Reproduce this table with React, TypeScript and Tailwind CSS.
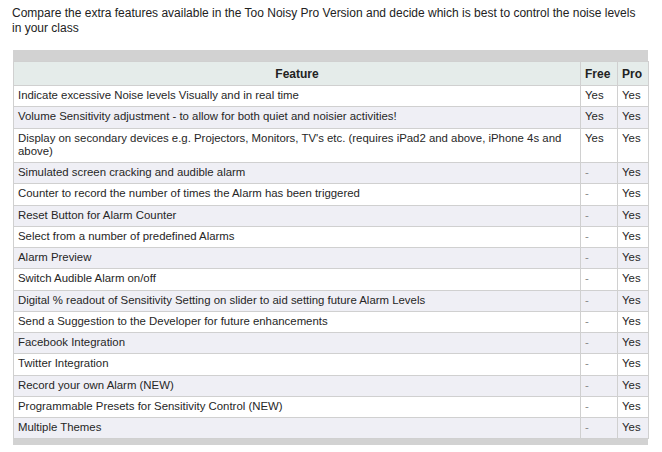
import React from 'react';

type Row = { feature: string; free: string; pro: string };

const rows: Row[] = [
  { feature: 'Indicate excessive Noise levels Visually and in real time', free: 'Yes', pro: 'Yes' },
  { feature: 'Volume Sensitivity adjustment - to allow for both quiet and noisier activities!', free: 'Yes', pro: 'Yes' },
  {
    feature: "Display on secondary devices e.g. Projectors, Monitors, TV's etc. (requires iPad2 and above, iPhone 4s and above)",
    free: 'Yes',
    pro: 'Yes',
  },
  { feature: 'Simulated screen cracking and audible alarm', free: '-', pro: 'Yes' },
  { feature: 'Counter to record the number of times the Alarm has been triggered', free: '-', pro: 'Yes' },
  { feature: 'Reset Button for Alarm Counter', free: '-', pro: 'Yes' },
  { feature: 'Select from a number of predefined Alarms', free: '-', pro: 'Yes' },
  { feature: 'Alarm Preview', free: '-', pro: 'Yes' },
  { feature: 'Switch Audible Alarm on/off', free: '-', pro: 'Yes' },
  { feature: 'Digital % readout of Sensitivity Setting on slider to aid setting future Alarm Levels', free: '-', pro: 'Yes' },
  { feature: 'Send a Suggestion to the Developer for future enhancements', free: '-', pro: 'Yes' },
  { feature: 'Facebook Integration', free: '-', pro: 'Yes' },
  { feature: 'Twitter Integration', free: '-', pro: 'Yes' },
  { feature: 'Record your own Alarm (NEW)', free: '-', pro: 'Yes' },
  { feature: 'Programmable Presets for Sensitivity Control (NEW)', free: '-', pro: 'Yes' },
  { feature: 'Multiple Themes', free: '-', pro: 'Yes' },
];

const App: React.FC = () => {
  return (
    <div className="min-h-screen bg-white px-[12px] pt-[6px] font-['Liberation_Sans',Arial,sans-serif]">
      <p className="w-[632px] text-[12px] leading-[15px] text-[#222]">
        Compare the extra features available in the Too Noisy Pro Version and decide which is best to control the noise levels in your class
      </p>

      <div className="mt-[14px] ml-[1px] w-[635px]">
        {/* top grey bar */}
        <div className="h-[11px] bg-[#d2d2d2]"></div>
        <table className="w-full border-collapse table-fixed text-[11.4px] text-[#262626]">
          <colgroup>
            <col className="w-[567px]" />
            <col className="w-[37px]" />
            <col className="w-[31px]" />
          </colgroup>
          <thead>
            <tr className="bg-[#e5ecea] h-[24px]">
              <th className="border border-[#d0d0d0] text-center text-[12px] font-bold text-[#222]">Feature</th>
              <th className="border border-[#d0d0d0] text-left pl-[4px] text-[12px] font-bold text-[#222]">Free</th>
              <th className="border border-[#d0d0d0] text-left pl-[4px] text-[12px] font-bold text-[#222]">Pro</th>
            </tr>
          </thead>
          <tbody>
            {rows.map((r, i) => (
              <tr key={i} className={i % 2 === 0 ? 'bg-white' : 'bg-[#efeff5]'}>
                <td className="border border-[#d0d0d0] pl-[4px] pr-[2px] pt-[3px] pb-[4px] leading-[13.25px] align-top">
                  {r.feature}
                </td>
                <td
                  className={
                    'border border-[#d0d0d0] pl-[4px] pt-[3px] pb-[4px] leading-[13.25px] align-top ' +
                    (r.free === '-' ? 'text-[#888]' : '')
                  }
                >
                  {r.free}
                </td>
                <td className="border border-[#d0d0d0] pl-[4px] pt-[3px] pb-[4px] leading-[13.25px] align-top">{r.pro}</td>
              </tr>
            ))}
          </tbody>
        </table>
        {/* bottom grey bar */}
        <div className="h-[6px] bg-[#d2d2d2]"></div>
      </div>
    </div>
  );
};

export default App;
